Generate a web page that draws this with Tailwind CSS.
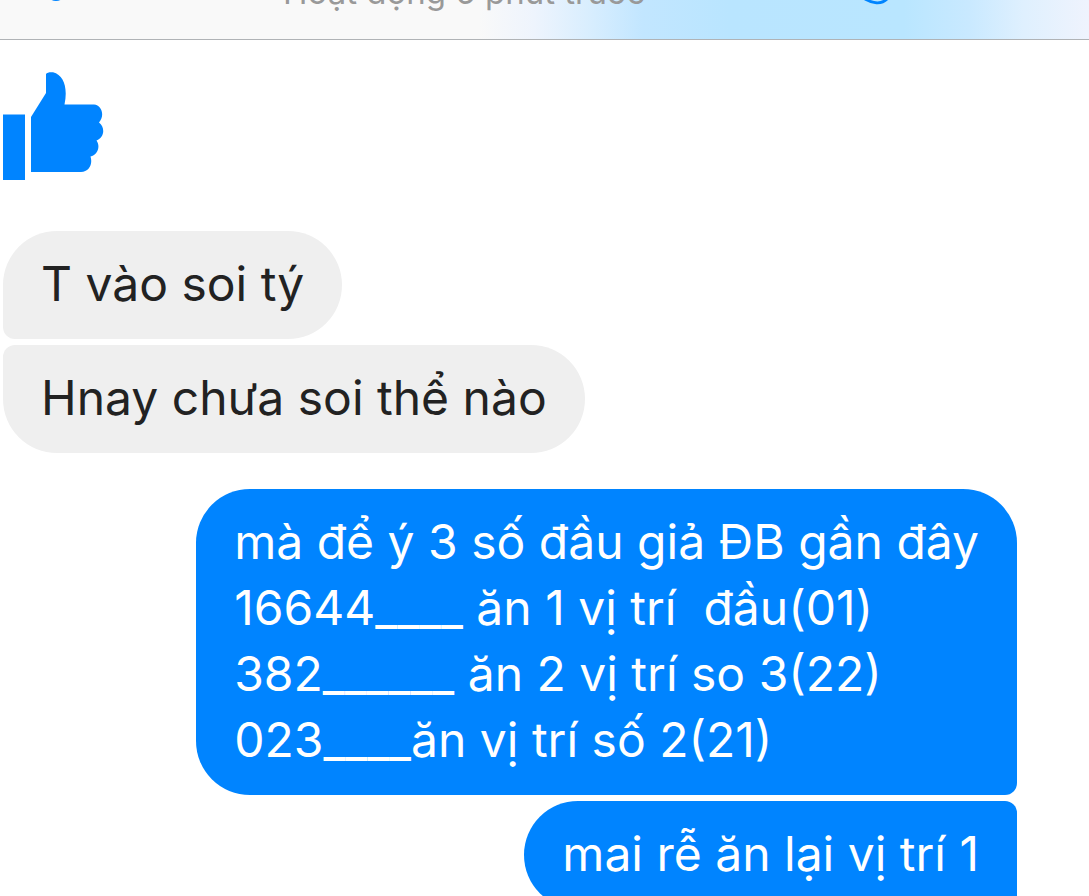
<!DOCTYPE html>
<html lang="vi">
<head>
<meta charset="utf-8">
<meta name="viewport" content="width=device-width, initial-scale=1">
<title>Trò chuyện</title>
<script src="https://cdn.jsdelivr.net/npm/@tailwindcss/browser@4"></script>
</head>
<body class="min-h-screen overflow-hidden bg-white font-[Inter,'Noto_Sans',sans-serif]">
<header class="relative flex h-10 items-start justify-between overflow-hidden border-b border-[#b0b3b6] bg-[linear-gradient(to_right,#f9f9f9_44%,#eef4fd_49%,#d9eefe_54%,#c2e6ff_59%,#b9e5ff_67%,#b9e6ff_83%,#c9e9ff_89%,#dff0fe_94%,#eff3fd_100%)]">
  <button type="button" aria-label="Quay lại" class="ml-12">
    <svg class="-mt-10 block" width="18" height="42" viewBox="0 0 18 42" fill="none" stroke="#0084ff" stroke-width="4"><circle cx="8" cy="31" r="8"/></svg>
  </button>
  <p class="absolute left-[283px] -top-7 text-[33px] leading-10 whitespace-nowrap text-[#999]">Hoạt động 6 phút trước</p>
  <button type="button" aria-label="Gọi" class="mr-[197px]">
    <svg class="block" width="30" height="6" viewBox="0 0 30 6" fill="none" stroke="#0084ff" stroke-width="3"><path d="M3-1C10 3 19 5 25-1"/></svg>
  </button>
</header>
<main class="flex flex-col pl-[3px] pr-18 pt-8 text-5xl leading-[66px] text-[#222]">
  <svg role="img" aria-label="Thích" class="mb-[51px] block" width="101" height="108" viewBox="0 0 101 108" fill="#0084ff">
    <path d="M0 42.500H22V108H0Z"/>
    <path d="M28 45L43 21V2C44 0 48 0 50 .3C61 3 65 16 61.500 32.500H91C99 33 102 44 96 50.500C102 55 102 65 93.500 68.500C98 75 94 83 87.500 84.500C90 92 86 100 78 100H28Z"/>
  </svg>
  <section class="mb-9 flex flex-col items-start gap-1.5">
    <p class="rounded-[54px] rounded-bl-xl bg-[#efefef] px-[38px] pt-5 pb-[22px] leading-[66px]">T vào soi tý</p>
    <p class="rounded-[54px] rounded-tl-xl bg-[#efefef] px-[38px] pt-5 pb-[22px] leading-[66px]">Hnay chưa soi thể nào</p>
  </section>
  <section class="flex flex-col items-end gap-1.5 text-white">
    <p class="rounded-[54px] rounded-br-xl bg-[#0084ff] px-[38px] pt-5 pb-[22px] whitespace-pre">mà để ý 3 số đầu giả ĐB gần đây
16644____ ăn 1 vị trí  đầu(01)
382______ ăn 2 vị trí so 3(22)
023____ăn vị trí số 2(21)</p>
    <p class="rounded-l-[54px] rounded-r-xl bg-[#0084ff] px-[38px] pt-5 pb-[22px]">mai rễ ăn lại vị trí 1</p>
  </section>
</main>
</body>
</html>
